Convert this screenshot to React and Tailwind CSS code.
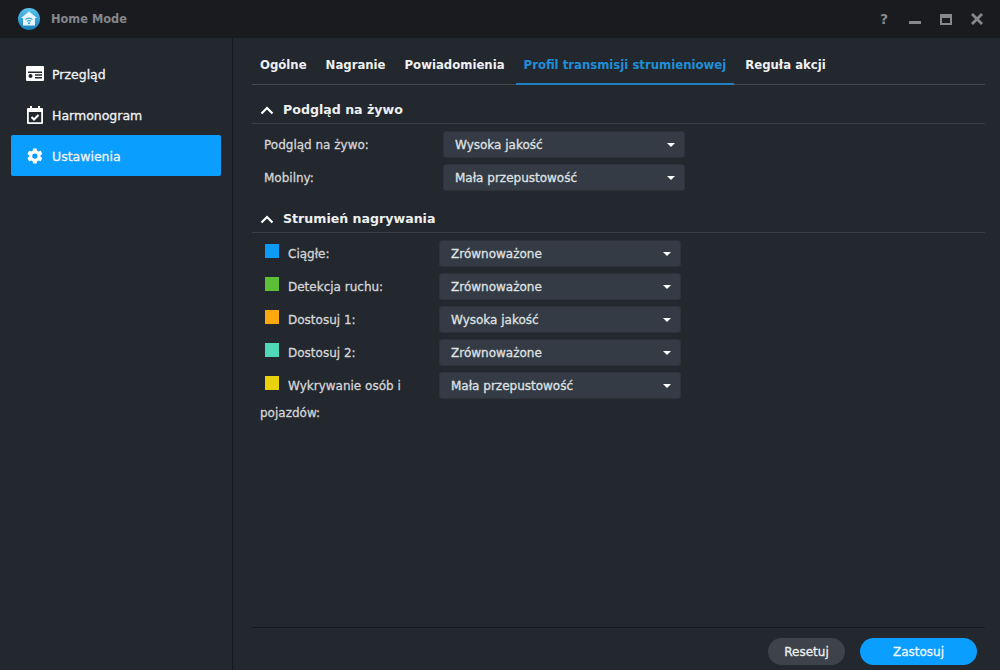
import React from "react";

const font = "font-['DejaVu_Sans','Liberation_Sans',sans-serif]";
// the reference text sits between regular and bold, so thicken the regular face a little
const semi = "[-webkit-text-stroke:0.3px]";

const OverviewIcon = () => (
  <svg width="18" height="15" viewBox="0 0 18 15">
    <path fill="#fff" fillRule="evenodd" d="M1 0h16a1 1 0 0 1 1 1v13a1 1 0 0 1-1 1H1a1 1 0 0 1-1-1V1a1 1 0 0 1 1-1zM2 5.500h14v1.500H2zM9 8.300h7v1.500H9zM9 11h7v1.500H9z" />
    <circle cx="4.500" cy="10" r="2" fill="#23272e" />
  </svg>
);

const CalendarIcon = () => (
  <svg width="16" height="18" viewBox="0 0 16 18">
    <path fill="#fff" fillRule="evenodd" d="M3 0h2v2h6V0h2v2h2a1 1 0 0 1 1 1v14a1 1 0 0 1-1 1H1a1 1 0 0 1-1-1V3a1 1 0 0 1 1-1h2zM1.800 6v10.200h12.400V6z" />
    <path fill="none" stroke="#fff" strokeWidth="2" d="M4.500 11l2.500 2.500 4.500-4.500" />
  </svg>
);

const GearIcon = () => (
  <svg width="18" height="18" viewBox="0 0 24 24">
    <path fill="#fff" d="M19.400 13c.04-.33.060-.66.060-1s-.02-.67-.06-1l2.150-1.680a.5.500 0 0 0 .12-.64l-2.040-3.530a.5.500 0 0 0-.62-.22l-2.540 1.020a7.500 7.500 0 0 0-1.730-1L14.360 2.420A.5.500 0 0 0 13.860 2H9.780a.5.500 0 0 0-.5.42l-.38 2.700a7.800 7.800 0 0 0-1.730 1L4.630 5.100a.5.500 0 0 0-.62.22L1.970 8.850a.5.500 0 0 0 .12.64L4.240 11.170a8 8 0 0 0 0 1.660l-2.150 1.680a.5.500 0 0 0-.12.64l2.040 3.530c.13.220.39.310.62.220l2.540-1.020c.53.410 1.110.750 1.730 1l.38 2.700c.04.240.25.420.5.420h4.080c.25 0 .46-.18.5-.42l.38-2.700a7.800 7.800 0 0 0 1.730-1l2.540 1.020c.23.090.49 0 .62-.22l2.040-3.530a.5.500 0 0 0-.12-.64zM11.820 15.500a3.500 3.500 0 1 1 0-7 3.500 3.500 0 0 1 0 7z" />
  </svg>
);

const HomeLogo = () => (
  <svg width="22" height="22" viewBox="0 0 22 22">
    <defs>
      <linearGradient id="logo" x1="0" y1="0" x2="0" y2="1">
        <stop offset="0" stopColor="#5cc4ee" />
        <stop offset="1" stopColor="#1780bb" />
      </linearGradient>
    </defs>
    <circle cx="11" cy="11" r="11" fill="url(#logo)" />
    <path fill="#e8f6fc" d="M11 3.500l8 6.500h-2v7.500H5V10H3z" />
    <path fill="none" stroke="#2a9fd8" strokeWidth="1.200" d="M7.600 11.600a4.800 4.800 0 0 1 6.800 0M9.200 13.400a2.500 2.500 0 0 1 3.600 0" />
    <circle cx="11" cy="15.300" r="1" fill="#2a9fd8" />
  </svg>
);

const Chevron = () => (
  <svg width="14" height="9" viewBox="0 0 14 9">
    <path fill="none" stroke="#fff" strokeWidth="2.200" d="M1.500 7.500L7 2l5.500 5.500" />
  </svg>
);

const navItems = [
  { label: "Przegląd", icon: <OverviewIcon /> },
  { label: "Harmonogram", icon: <CalendarIcon /> },
  { label: "Ustawienia", icon: <GearIcon />, active: true },
];

const tabs = ["Ogólne", "Nagranie", "Powiadomienia", "Profil transmisji strumieniowej", "Reguła akcji"];

const recording = [
  { label: "Ciągłe:", color: "bg-[#0d9bf5]", value: "Zrównoważone" },
  { label: "Detekcja ruchu:", color: "bg-[#5cbf35]", value: "Zrównoważone" },
  { label: "Dostosuj 1:", color: "bg-[#fba90e]", value: "Wysoka jakość" },
  { label: "Dostosuj 2:", color: "bg-[#4fd9b8]", value: "Zrównoważone" },
  { label: "Wykrywanie osób i pojazdów:", color: "bg-[#e9d20c]", value: "Mała przepustowość" },
];

const Select = ({ value }) => (
  <div className={`w-[242px] h-[27px] shrink-0 flex items-center justify-between pl-[11px] pr-[9px] rounded-[3px] bg-[#353b44] border border-[#2e333b] text-[12px] text-[#dfe1e3] ${semi}`}>
    <span>{value}</span>
    <span className="w-0 h-0 border-x-[4px] border-x-transparent border-t-[4px] border-t-white" />
  </div>
);

const SectionHeader = ({ title }) => (
  <div className="h-[27px] flex items-center gap-[9px] pl-[8px] border-b border-[#3a3f47]">
    <Chevron />
    <span className="text-[12.6px] font-bold text-[#eef0f1]">{title}</span>
  </div>
);

export default function App() {
  return (
    <div className={`w-[1000px] h-[670px] flex flex-col bg-[#23272e] overflow-hidden ${font}`}>
      {/* title bar */}
      <div className="h-[38px] shrink-0 flex items-center justify-between bg-[#1a1b1f] pl-[18px] pr-[16px]">
        <div className="flex items-center gap-[11px]">
          <HomeLogo />
          <span className="pt-[2px] text-[11.4px] font-bold text-[#84878b]">Home Mode</span>
        </div>
        <div className="flex items-center gap-[17px] text-[#86888b]">
          <span className="w-[14px] text-center text-[14px] font-bold">?</span>
          <span className="w-[14px] flex justify-center"><span className="w-[12px] h-[3px] mt-[7px] bg-[#86888b]" /></span>
          <svg width="14" height="14" viewBox="0 0 14 14">
            <path fill="#86888b" fillRule="evenodd" d="M1 2h12v11H1zm2 4v5h8V6z" />
          </svg>
          <svg width="14" height="14" viewBox="0 0 14 14">
            <path stroke="#86888b" strokeWidth="2.800" d="M2 2l10 10M12 2L2 12" />
          </svg>
        </div>
      </div>

      <div className="flex-1 flex min-h-0">
        {/* sidebar */}
        <div className="w-[233px] shrink-0 border-r border-[#17191d] pt-[15px] pl-[11px] pr-[11px]">
          {navItems.map((item) => (
            <div
              key={item.label}
              className={`h-[41px] flex items-center rounded-[2px] pl-[15px] gap-[8px] ${item.active ? "bg-[#0a9eff]" : ""}`}
            >
              <span className="w-[18px] flex justify-center">{item.icon}</span>
              <span className={`pt-[4px] text-[12.5px] text-[#f2f3f4] ${semi}`}>{item.label}</span>
            </div>
          ))}
        </div>

        {/* content */}
        <div className="flex-1 flex flex-col pl-[19px] pr-[15px]">
          <div className="h-[47px] shrink-0 flex items-stretch border-b border-[#444951]">
            {tabs.map((tab) => {
              const active = tab.startsWith("Profil");
              return (
                <div
                  key={tab}
                  className={`px-[8px] -mb-px mr-[3px] pt-[19px] text-[11.7px] font-bold border-b-2 ${active ? "text-[#1f8ed8] border-[#1f7fc0]" : "text-[#eef0f1] border-transparent"}`}
                >
                  {tab}
                </div>
              );
            })}
          </div>

          <div className="flex-1 pt-[12px]">
            <SectionHeader title="Podgląd na żywo" />
            <div className="flex flex-col gap-[6px] pt-[7px] pl-[12px]">
              <div className="flex items-center">
                <span className={`w-[179px] text-[12px] text-[#d4d6d8] ${semi}`}>Podgląd na żywo:</span>
                <Select value="Wysoka jakość" />
              </div>
              <div className="flex items-center">
                <span className={`w-[179px] text-[12px] text-[#d4d6d8] ${semi}`}>Mobilny:</span>
                <Select value="Mała przepustowość" />
              </div>
            </div>

            <div className="mt-[15px]">
              <SectionHeader title="Strumień nagrywania" />
            </div>
            <div className="flex flex-col gap-[6px] pt-[7px] pl-[8px]">
              {recording.map((row) => (
                <div key={row.label} className="flex items-start h-[27px]">
                  <div className={`w-[179px] h-[27px] shrink-0 pt-[1px] pr-[30px] text-[12px] text-[#d4d6d8] leading-[27px] ${semi}`}>
                    <span className={`float-left w-[14px] h-[14px] mt-[3px] ml-[5px] mr-[9px] ${row.color}`} />
                    {row.label}
                  </div>
                  <Select value={row.value} />
                </div>
              ))}
            </div>
          </div>

          {/* footer */}
          <div className="h-[43px] shrink-0 flex items-end justify-end gap-[15px] pb-[5px] pr-[8px] border-t border-[#17191d]">
            <button className={`w-[77px] h-[27px] pt-[1px] rounded-full bg-[#3d424b] text-[12px] text-[#eef0f1] ${semi}`}>Resetuj</button>
            <button className={`w-[117px] h-[27px] pt-[1px] rounded-full bg-[#0a9eff] text-[12px] text-[#eef6ff] ${semi}`}>Zastosuj</button>
          </div>
        </div>
      </div>
    </div>
  );
}
